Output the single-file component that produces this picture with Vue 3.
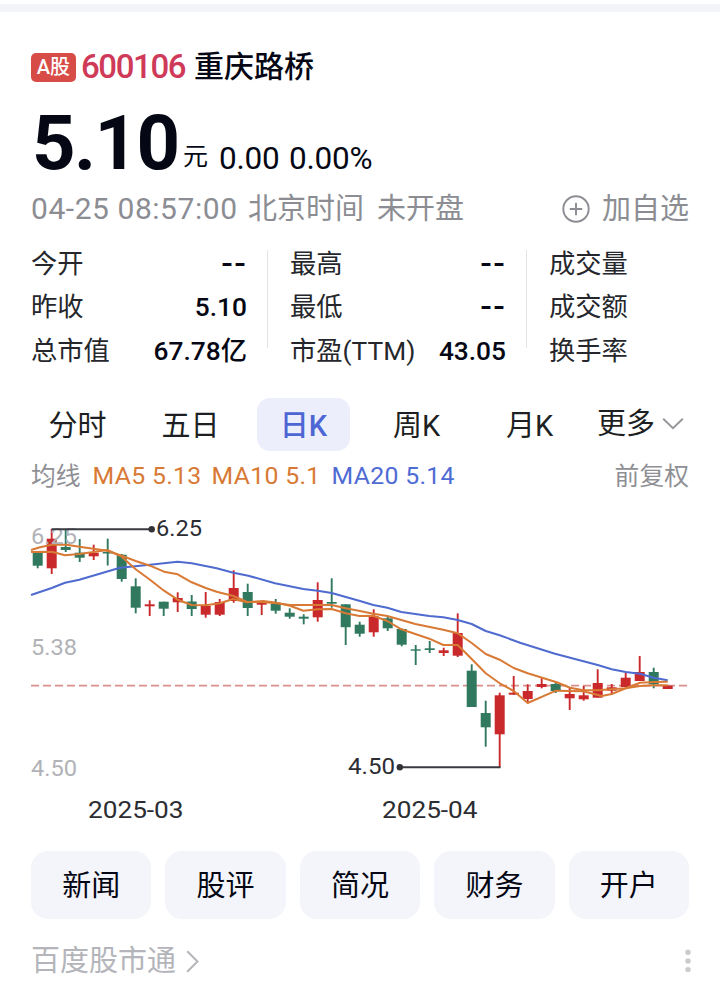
<script setup>
const stats = [
  [
    { label: '今开', value: '--', empty: true },
    { label: '昨收', value: '5.10' },
    { label: '总市值', value: '67.78亿' },
  ],
  [
    { label: '最高', value: '--', empty: true },
    { label: '最低', value: '--', empty: true },
    { label: '市盈(TTM)', value: '43.05' },
  ],
  [
    { label: '成交量', value: '' },
    { label: '成交额', value: '' },
    { label: '换手率', value: '' },
  ],
]

const tabs = ['分时', '五日', '日K', '周K', '月K']
const links = ['新闻', '股评', '简况', '财务', '开户']

// Each row: [rising, body top, body bottom, wick top, wick bottom]
const rows = [
  [0, 552.7, 565.7, 551.5, 568.3], [1, 538.7, 568.3, 529, 574], [0, 547, 550, 530, 552],
  [0, 552.7, 557.7, 539, 562], [1, 552.7, 556.3, 544.7, 560], [0, 552, 553.5, 538.7, 565.5],
  [0, 554.7, 579, 554, 581.7], [0, 586.3, 607.7, 578.3, 613.3], [1, 604.3, 606.3, 600.3, 616],
  [0, 601.7, 608.7, 601.7, 616], [1, 598, 602.3, 592.3, 612], [0, 601.5, 609, 595, 616],
  [1, 606, 614.7, 592, 617.7], [1, 602, 614.7, 599, 616], [1, 588, 601, 570.3, 602.7],
  [0, 592, 608, 583.7, 616], [1, 602.7, 604.7, 601.5, 615], [0, 603.7, 610.7, 599, 613.7],
  [0, 612.7, 616.7, 608.3, 618.7], [0, 616.7, 618.7, 614.3, 624.3], [1, 600, 617.3, 582.3, 621.7],
  [0, 602, 603.7, 578.3, 607.7], [0, 604.3, 627.2, 604.3, 645], [0, 624.7, 633.7, 621.7, 636.7],
  [1, 616.3, 632.3, 609.3, 636.7], [0, 618.3, 628.3, 616, 631], [0, 629, 644.7, 628.5, 646.3],
  [0, 649.3, 650.7, 645, 665], [0, 648.3, 650, 641, 653], [1, 650.3, 653, 647.7, 656],
  [1, 633, 655.7, 613.3, 657], [0, 670.7, 707, 664.3, 707], [0, 713, 727.3, 700.7, 746.7],
  [1, 695.3, 734.3, 692.7, 767.3], [1, 692.7, 694.7, 676, 694.7], [1, 691, 699, 684.3, 702.7],
  [1, 684, 687, 678, 688.3], [0, 684, 691, 682.3, 693], [1, 694, 698.3, 687.3, 710],
  [1, 695.3, 699.3, 686, 700.7], [1, 683, 697.7, 669.3, 697.7], [1, 687.3, 690.7, 684, 694.7],
  [1, 677.7, 687, 673, 687], [1, 672, 681, 656, 681], [0, 672, 684.3, 667.7, 688.3],
  [1, 685.7, 689, 685.7, 689],
]
const candles = rows.map(([up, top, bottom, high, low], i) => ({
  x: 37.7 + 14 * i, up, top, bottom, high, low,
}))

const ma5 = '31,552 51.7,551.7 65,555.3 79.3,554 107.3,550 121.7,556.7 135.7,569.3 150,579.7 164,590.7 177.7,599.7 191.7,605 205.7,605.3 220,603.3 233,599 247,602.3 263,601 276.7,602.7 290,605.7 303.3,610.7 317.7,609.3 331.7,609 345.7,613.3 359.5,616 373.3,615.7 387.3,621 401.3,629.3 429.3,638.7 443.3,645 457.7,645 471.7,659 485.7,673.3 499.7,683.3 513.7,691 527.7,703 556,690.7 583.3,691.3 601.7,696 611.7,694 625.7,688.3 640,682.7 653.7,682 667.7,681.7'
const ma10 = '31,550 40,547.3 51.7,544.7 66.7,544.7 79.3,546.7 107.3,550.7 121.7,555.7 135.7,561 150,565.7 164,571.7 177.7,574.3 191.7,582.3 205.7,588 216.7,591.7 233.3,596 246.7,601.7 261.7,602 276.7,603.3 290,605 331.7,605 345.7,608.3 360,611 373.3,613.7 387.3,616 401.3,620 415.3,624 443.3,629.7 457.7,633.3 471.7,643 485.7,654 499.7,659.7 513.7,668 527.7,673.3 556.7,682.3 570,687.7 583.3,690.3 597.7,690.3 611.7,689.3 625.7,688.3 640,686 653.7,685.3 667.7,685.3'
const ma20 = '31,595 51.7,588 65,582.7 79.3,579.7 120,567.7 150,564.7 177.7,561.8 191.7,563.3 216.7,568.3 233.3,572.7 248.3,575.7 275,583.3 303.3,589 317.7,590.7 331.7,593 360,601 373.3,605 387.3,607.7 401.3,612 429.3,616 443.3,617.3 457.7,620 471.7,624 485.7,631 499.7,635.3 520,642.7 555,653.7 597.7,665 611.7,669.3 625.7,672 640,673.7 653.7,677.7 667.7,680.3'
</script>

<template>
  <main class="page">
    <div class="strip"></div>

    <header class="title">
      <span class="badge">A股</span>
      <span class="code">600106</span>
      <h1 class="name">重庆路桥</h1>
    </header>

    <section class="quote">
      <span class="price">5.10</span>
      <span class="unit">元</span>
      <span class="change">0.00</span>
      <span class="change percent">0.00%</span>
    </section>

    <section class="status">
      <span class="clock">04-25 08:57:00</span>
      <span class="zone">北京时间</span>
      <span class="state">未开盘</span>
      <span class="add">
        <svg width="28" height="28" viewBox="0 0 28 28" fill="none" stroke="currentColor" stroke-width="1.9">
          <circle cx="14" cy="14" r="12.7" />
          <path d="M14 7.8v12.4M7.8 14h12.4" />
        </svg>
        加自选
      </span>
    </section>

    <section class="stats">
      <dl v-for="(column, c) in stats" :key="c" class="column">
        <div v-for="item in column" :key="item.label" class="stat">
          <dt>{{ item.label }}</dt>
          <dd :class="{ empty: item.empty }">{{ item.value }}</dd>
        </div>
      </dl>
    </section>

    <nav class="tabs">
      <span v-for="tab in tabs" :key="tab" class="tab"><span :class="['pill', { active: tab === '日K' }]">{{ tab }}</span></span>
      <span class="more">
        更多
        <svg width="22" height="14" viewBox="0 0 22 14" fill="none" stroke="#96979c" stroke-width="2">
          <path d="M1.2 1.8L11 11.2L20.8 1.8" />
        </svg>
      </span>
    </nav>

    <section class="averages">
      <span class="muted">均线</span>
      <span class="ma5">MA5 5.13</span>
      <span class="ma10">MA10 5.1</span>
      <span class="ma20">MA20 5.14</span>
      <span class="muted adjust">前复权</span>
    </section>

    <svg class="chart" width="720" height="330" viewBox="0 500 720 330">
      <line x1="31" x2="689" y1="685.7" y2="685.7" stroke="#d98f8c" stroke-width="1.7" stroke-dasharray="8 4" />
      <g v-for="c in candles" :key="c.x" :fill="c.up ? '#c9292b' : '#30795f'">
        <rect :x="c.x - 0.95" :y="c.high" width="1.9" :height="c.low - c.high" />
        <rect :x="c.x - 5" :y="c.top" width="10" :height="c.bottom - c.top" />
      </g>
      <g fill="none" stroke-width="2" stroke-linejoin="round">
        <polyline :points="ma20" stroke="#4f6bd0" />
        <polyline :points="ma10" stroke="#d87a35" />
        <polyline :points="ma5" stroke="#d87a35" />
      </g>
      <g class="axis">
        <text x="31" y="543.5" textLength="46" lengthAdjust="spacingAndGlyphs">6.25</text>
        <text x="31" y="655" textLength="46" lengthAdjust="spacingAndGlyphs">5.38</text>
        <text x="31" y="775.5" textLength="46" lengthAdjust="spacingAndGlyphs">4.50</text>
      </g>
      <g stroke="#393b40" stroke-width="2">
        <path d="M51.5 529.3H151.5M400 767.2H500.5" />
      </g>
      <circle cx="151.7" cy="529.3" r="3.2" fill="#303236" />
      <circle cx="399.8" cy="767.2" r="3.2" fill="#303236" />
      <g class="mark">
        <text x="156" y="535.7" textLength="46" lengthAdjust="spacingAndGlyphs">6.25</text>
        <text x="348" y="773.7" textLength="47" lengthAdjust="spacingAndGlyphs">4.50</text>
      </g>
      <g class="date">
        <text x="88" y="818" textLength="95.5" lengthAdjust="spacingAndGlyphs">2025-03</text>
        <text x="382" y="818" textLength="95.5" lengthAdjust="spacingAndGlyphs">2025-04</text>
      </g>
    </svg>

    <nav class="links">
      <span v-for="link in links" :key="link" class="link">{{ link }}</span>
    </nav>

    <footer class="footer">
      <span>百度股市通</span>
      <svg width="13" height="23" viewBox="0 0 13 23" fill="none" stroke="#b4b5ba" stroke-width="2">
        <path d="M1.2 1.2L11.5 11.5L1.2 21.8" />
      </svg>
      <svg class="dots" width="6" height="24" viewBox="0 0 6 24" fill="#cbcbce">
        <circle cx="3" cy="3.2" r="2.7" /><circle cx="3" cy="12" r="2.7" /><circle cx="3" cy="20.6" r="2.7" />
      </svg>
    </footer>
  </main>
</template>

<style>
body {
  background: #fff;
}
</style>

<style scoped>
.page {
  box-sizing: border-box;
  width: 720px;
  height: 991px;
  padding-top: 4px;
  overflow: hidden;
  background: #fff;
  color: #050814;
  font-family: Roboto, "Noto Sans CJK SC", sans-serif;
  white-space: nowrap;
}
.strip {
  height: 8px;
  background: #f3f4f9;
}
.title {
  display: flex;
  align-items: center;
  height: 42px;
  margin-top: 34px;
  padding-left: 31px;
  line-height: 46px;
}
.badge {
  width: 45px;
  height: 29px;
  border-radius: 5px;
  background: #d84c48;
  color: #fff;
  font-size: 20px;
  font-weight: 500;
  line-height: 29px;
  text-align: center;
}
.code {
  box-sizing: border-box;
  width: 112px;
  padding-left: 5px;
  color: #cf3a59;
  font-size: 33px;
  font-weight: 500;
  letter-spacing: -1.4px;
}
.name {
  margin: 0;
  padding-left: 6px;
  font-size: 30px;
  font-weight: 500;
}
.quote {
  display: flex;
  align-items: baseline;
  height: 100px;
  padding-left: 32px;
  line-height: 111px;
}
.price {
  width: 151px;
  font-size: 76px;
  font-weight: 700;
  letter-spacing: -1.6px;
}
.unit {
  position: relative;
  top: -4px;
  width: 36px;
  font-size: 25px;
}
.change {
  width: 70px;
  font-size: 31.5px;
  letter-spacing: -0.2px;
}
.status {
  display: flex;
  align-items: center;
  height: 42px;
  padding: 0 31px;
  color: #8b8d93;
  font-size: 29px;
  line-height: 46px;
}
.clock {
  width: 217px;
  font-size: 30px;
  letter-spacing: 0.55px;
}
.zone {
  width: 129px;
}
.add {
  display: flex;
  align-items: center;
  gap: 12px;
  margin-left: auto;
}
.stats {
  display: flex;
  height: 134px;
  margin-top: 12px;
  padding-left: 31px;
}
.column {
  position: relative;
  flex: none;
  width: 216px;
  margin: 0 43px 0 0;
}
.column:not(:last-child)::after {
  content: "";
  position: absolute;
  top: 8px;
  right: -21px;
  width: 1px;
  height: 98px;
  background: #e3e4e8;
}
.stat {
  display: flex;
  justify-content: space-between;
  height: 43.3px;
  color: #25272c;
  font-size: 26.3px;
  line-height: 45px;
}
.stat dd {
  margin: 0;
  color: #050814;
  font-weight: 500;
}
.stat .empty {
  font-family: "Liberation Sans", sans-serif;
  font-size: 36px;
  letter-spacing: 1px;
  line-height: 40px;
}
.tabs {
  display: flex;
  align-items: center;
  height: 54px;
  margin-top: 21px;
  padding-left: 21px;
  color: #1d1f23;
  font-size: 29px;
}
.tab {
  display: flex;
  justify-content: center;
  width: 113px;
}
.pill {
  width: 93px;
  height: 53px;
  border-radius: 13px;
  line-height: 56px;
  text-align: center;
}
.active {
  background: #eceefb;
  color: #4d66d4;
  font-weight: 500;
}
.more {
  display: flex;
  align-items: center;
  gap: 7px;
  padding-left: 11px;
  line-height: 57px;
}
.averages {
  display: flex;
  height: 40px;
  margin-top: 2px;
  padding: 0 31px;
  font-size: 24.8px;
  line-height: 46px;
}
.averages .muted {
  color: #8f9095;
  line-height: 48px;
}
.averages .adjust {
  margin-left: auto;
}
.ma5 {
  width: 119px;
  margin-left: 12px;
  color: #d87a35;
  letter-spacing: 0.3px;
}
.ma10 {
  width: 120px;
  color: #d87a35;
  letter-spacing: 0.3px;
}
.ma20 {
  color: #4f6bd4;
  letter-spacing: 0.3px;
}
.chart {
  display: block;
  margin-top: 7px;
}
.chart text {
  font-size: 22.5px;
}
.axis {
  fill: #b1b2b7;
}
.mark {
  fill: #2b2d32;
}
.chart .date text {
  font-size: 24px;
}
.date {
  fill: #2b2d32;
}
.links {
  display: flex;
  gap: 14px;
  margin-top: 21px;
  padding: 0 31px;
}
.link {
  flex: 1;
  height: 68px;
  border-radius: 17px;
  background: #f4f5fa;
  font-size: 29px;
  line-height: 70px;
  text-align: center;
}
.footer {
  display: flex;
  align-items: center;
  height: 42px;
  margin-top: 21px;
  padding: 0 29px 0 31px;
  color: #b4b5ba;
  font-size: 29px;
  line-height: 45px;
}
.footer svg {
  margin-left: 10px;
}
.footer .dots {
  margin-left: auto;
}
</style>
